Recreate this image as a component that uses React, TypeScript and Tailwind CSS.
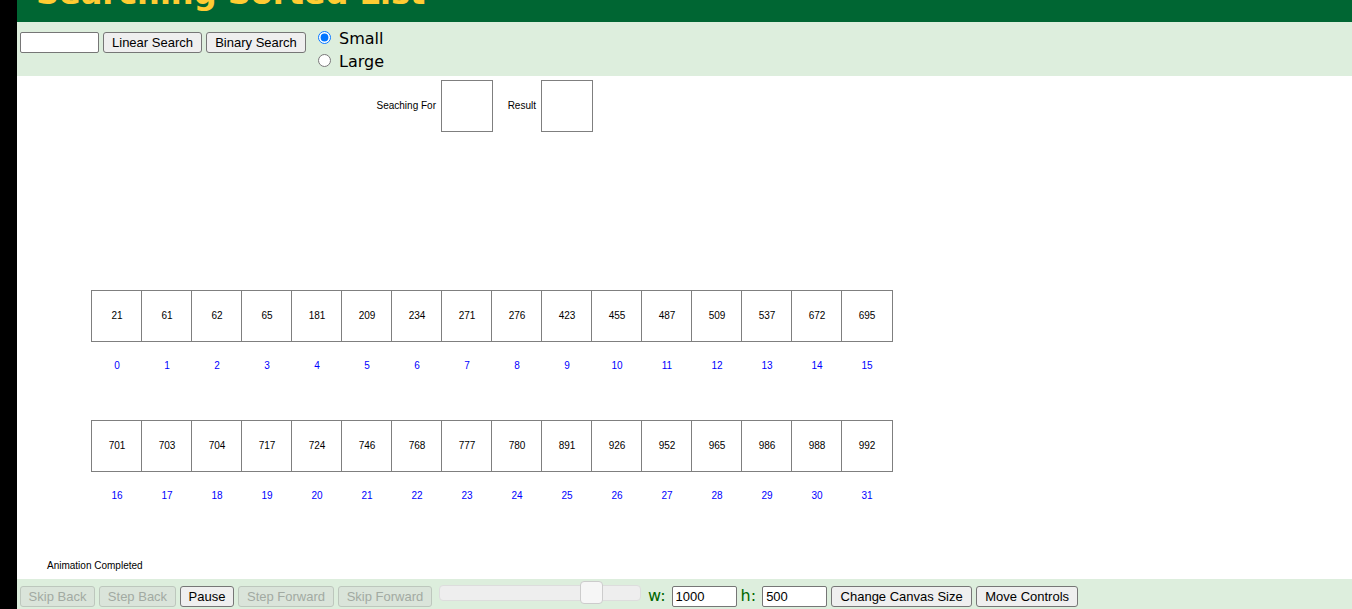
import { useState } from "react";
import type { ComponentProps } from "react";

const values = [
  21, 61, 62, 65, 181, 209, 234, 271, 276, 423, 455, 487, 509, 537, 672, 695,
  701, 703, 704, 717, 724, 746, 768, 777, 780, 891, 926, 952, 965, 986, 988, 992,
];
const rows = [0, 16];

function Button({ className = "", ...props }: ComponentProps<"button">) {
  return (
    <button
      type="button"
      className={`h-[21px] shrink-0 whitespace-nowrap rounded-[3px] border border-[#767676] bg-[#efefef] text-center font-['Liberation_Sans',Arial,sans-serif] text-[13px] leading-[19px] text-black disabled:border-[#bdc7bd] disabled:bg-[#dae4da] disabled:text-[#a2aaa2] ${className}`}
      {...props}
    />
  );
}

function TextField({ className = "", ...props }: ComponentProps<"input">) {
  return (
    <input
      type="text"
      className={`h-[21px] shrink-0 rounded-[2px] border border-[#767676] bg-white px-[3px] font-['Liberation_Sans',Arial,sans-serif] text-[13px] leading-[19px] text-black ${className}`}
      {...props}
    />
  );
}

function ArrayRow({ start }: { start: number }) {
  return (
    <div className="ml-[74px] flex">
      {values.slice(start, start + 16).map((value, i) => (
        <div key={value} className="group w-[50px] shrink-0 last:w-[52px]">
          <div className="flex h-[52px] items-center justify-center border-y border-l border-[#7f7f7f] pl-px group-last:border-r group-last:pl-0">
            {value}
          </div>
          <div className="flex h-[48px] items-center justify-center pl-[2px] text-[#0000ff] group-last:pl-0">
            {start + i}
          </div>
        </div>
      ))}
    </div>
  );
}

function ResultBox({ label, className }: { label: string; className: string }) {
  return (
    <div className={`flex items-center justify-end gap-[5px] ${className}`}>
      <span className="whitespace-nowrap">{label}</span>
      <div className="size-[52px] shrink-0 border border-[#7f7f7f]" />
    </div>
  );
}

export default function App() {
  const [size, setSize] = useState("small");
  return (
    <div className="h-screen overflow-hidden border-l-[17px] border-black bg-white font-['DejaVu_Sans',Verdana,sans-serif] text-[16px] text-black">
      <header className="flex h-[22px] items-end overflow-hidden bg-[#006633] px-[19px] pb-[10px]">
        <h1 className="whitespace-nowrap text-[32px] font-bold leading-[38px] text-[#ffcc33]">Searching Sorted List</h1>
      </header>

      <div className="flex h-[54px] items-start gap-1 bg-[#ddeedd] px-[3px] pt-[10px]">
        <TextField aria-label="Value to search for" className="w-[79px]" />
        <Button className="w-[99px]">Linear Search</Button>
        <Button className="w-[100px]">Binary Search</Button>
        <fieldset className="-mt-[6px] ml-2 flex flex-col">
          <label className="flex h-[23px] items-center gap-2 leading-[25px]">
            <input
              type="radio"
              name="size"
              className="size-[13px] accent-[#0075ff]"
              checked={size === "small"}
              onChange={() => setSize("small")}
            />
            <span className="pt-[2px]">Small</span>
          </label>
          <label className="flex h-[23px] items-center gap-2 leading-[25px]">
            <input
              type="radio"
              name="size"
              className="size-[13px] accent-[#0075ff]"
              checked={size === "large"}
              onChange={() => setSize("large")}
            />
            <span className="pt-[2px]">Large</span>
          </label>
        </fieldset>
      </div>

      <main className="h-[503px] pt-1 font-['Liberation_Sans',Arial,sans-serif] text-[10px] leading-[12px]">
        <div className="flex">
          <ResultBox label="Seaching For" className="w-[476px]" />
          <ResultBox label="Result" className="w-[100px]" />
        </div>
        <div className="flex flex-col gap-[30px] pt-[158px]">
          {rows.map((start) => (
            <ArrayRow key={start} start={start} />
          ))}
        </div>
        <p className="ml-[30px] pt-10">Animation Completed</p>
      </main>

      <footer className="flex items-start gap-1 bg-[#ddeedd] px-[3px] pt-[7px] text-[#006600]">
        <Button disabled className="w-[75px]">Skip Back</Button>
        <Button disabled className="w-[77px]">Step Back</Button>
        <Button className="w-[54px]">Pause</Button>
        <Button disabled className="w-[96px]">Step Forward</Button>
        <Button disabled className="w-[94px]">Skip Forward</Button>
        <label className="-mt-[6px] ml-[3px] flex w-[202px] shrink-0 flex-col text-center">
          <input
            type="range"
            min={0}
            max={100}
            defaultValue={79}
            className="h-[26px] w-full appearance-none bg-transparent [&::-webkit-slider-runnable-track]:h-[16px] [&::-webkit-slider-runnable-track]:rounded-[4px] [&::-webkit-slider-runnable-track]:border [&::-webkit-slider-runnable-track]:border-[#dddddd] [&::-webkit-slider-runnable-track]:bg-[#eeeeee] [&::-webkit-slider-thumb]:-mt-[5px] [&::-webkit-slider-thumb]:h-[23px] [&::-webkit-slider-thumb]:w-[23px] [&::-webkit-slider-thumb]:appearance-none [&::-webkit-slider-thumb]:rounded-[4px] [&::-webkit-slider-thumb]:border [&::-webkit-slider-thumb]:border-[#cccccc] [&::-webkit-slider-thumb]:bg-[#f6f6f6]"
          />
          <span className="leading-[19px]">Animation Speed</span>
        </label>
        <label className="ml-[3px] flex items-center gap-[6px] leading-[19px]">
          <span className="-mt-[2px]">w:</span>
          <TextField defaultValue="1000" className="w-[65px]" />
        </label>
        <label className="flex items-center gap-[6px] leading-[19px]">
          <span className="-mt-[2px]">h:</span>
          <TextField defaultValue="500" className="w-[65px]" />
        </label>
        <Button className="w-[141px]">Change Canvas Size</Button>
        <Button className="w-[102px]">Move Controls</Button>
      </footer>
    </div>
  );
}
